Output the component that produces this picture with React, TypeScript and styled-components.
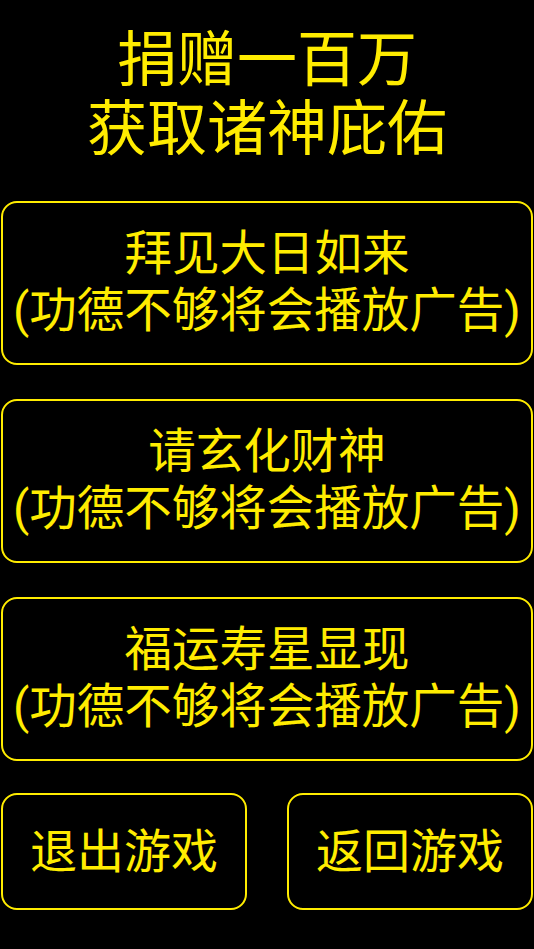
import React from 'react';
import styled, { createGlobalStyle } from 'styled-components';

const YELLOW = '#ffec00';

const GlobalStyle = createGlobalStyle`
  html, body {
    margin: 0;
    padding: 0;
    background: #000;
  }
  body {
    font-family: Roboto, "Noto Sans CJK SC", sans-serif;
  }
`;

const Screen = styled.div`
  width: 534px;
  height: 949px;
  background: #000;
  color: ${YELLOW};
  display: flex;
  flex-direction: column;
  box-sizing: border-box;
  padding: 26px 1px 0 1px;
`;

const Title = styled.h1`
  margin: 0;
  font-weight: 400;
  font-size: 60px;
  line-height: 69px;
  text-align: center;
  height: 175px;
`;

const Options = styled.div`
  display: flex;
  flex-direction: column;
  gap: 34px;
`;

const OptionButton = styled.button`
  box-sizing: border-box;
  width: 100%;
  height: 164px;
  background: #000;
  color: ${YELLOW};
  border: 2px solid ${YELLOW};
  border-radius: 16px;
  font-family: inherit;
  font-size: 47.5px;
  line-height: 57px;
  padding: 0;
  display: flex;
  flex-direction: column;
  align-items: center;
  justify-content: center;
  cursor: pointer;
`;

const BottomRow = styled.div`
  display: flex;
  justify-content: space-between;
  margin-top: 32px;
`;

const SmallButton = styled(OptionButton)`
  width: 246px;
  height: 117px;
  font-size: 47px;
`;

const options = ['拜见大日如来', '请玄化财神', '福运寿星显现'];

export default function App() {
  return (
    <>
      <GlobalStyle />
      <Screen>
        <Title>
          捐赠一百万
          <br />
          获取诸神庇佑
        </Title>
        <Options>
          {options.map(name => (
            <OptionButton key={name}>
              <span>{name}</span>
              <span>(功德不够将会播放广告)</span>
            </OptionButton>
          ))}
        </Options>
        <BottomRow>
          <SmallButton>退出游戏</SmallButton>
          <SmallButton>返回游戏</SmallButton>
        </BottomRow>
      </Screen>
    </>
  );
}
